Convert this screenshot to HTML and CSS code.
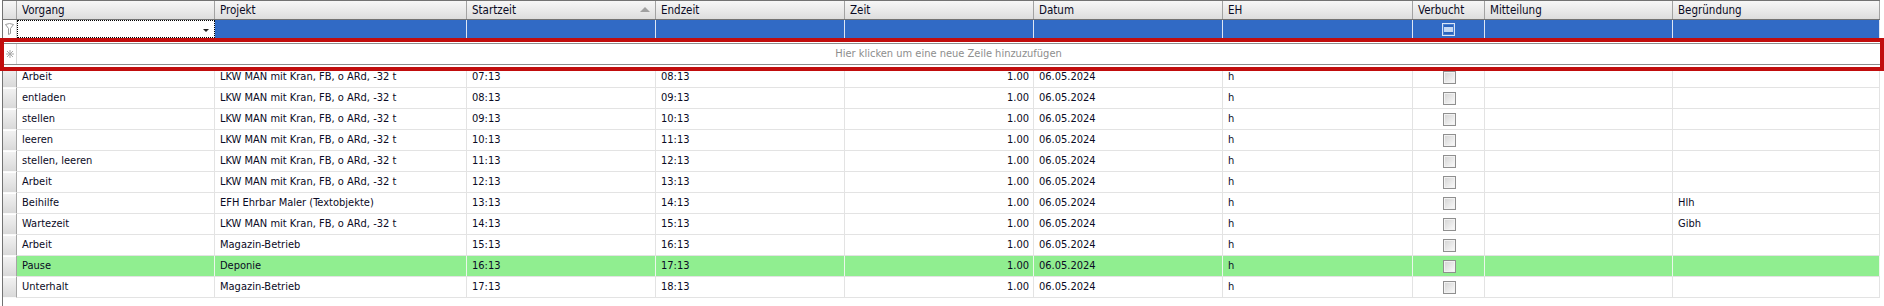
FILE: index.html
```html
<!DOCTYPE html>
<html lang="de">
<head>
    <meta charset="UTF-8">
    <title>Rapport - Vorgänge</title>
    <link rel="stylesheet" href="styles.css">
</head>
<body>
    <div class="grid">
        <!-- column headers -->
        <div class="row head">
            <div class="ind"></div>
            <div class="cell">Vorgang</div>
            <div class="cell">Projekt</div>
            <div class="cell sorted">Startzeit<span class="sort-up"></span></div>
            <div class="cell">Endzeit</div>
            <div class="cell">Zeit</div>
            <div class="cell">Datum</div>
            <div class="cell">EH</div>
            <div class="cell">Verbucht</div>
            <div class="cell">Mitteilung</div>
            <div class="cell">Begründung</div>
        </div>

        <!-- filter row -->
        <div class="row filter">
            <div class="ind">
                <svg width="9" height="12" viewBox="0 0 9 12">
                    <path d="M0.5 1.5 Q4.5 -0.5 8.5 1.5 L5.5 5.5 V10.5 L3.5 11.5 V5.5 Z" fill="#fff" stroke="#9a9a9a" stroke-width="1"/>
                </svg>
            </div>
            <div class="cell editor"><span class="drop"></span></div>
            <div class="cell"></div>
            <div class="cell"></div>
            <div class="cell"></div>
            <div class="cell"></div>
            <div class="cell"></div>
            <div class="cell"></div>
            <div class="cell center"><span class="check indeterminate"></span></div>
            <div class="cell"></div>
            <div class="cell"></div>
        </div>

        <!-- new row -->
        <div class="newrow">
            <div class="ind">
                <svg width="8" height="8" viewBox="0 0 8 8">
                    <g stroke="#a8a8a8" stroke-width="1">
                        <line x1="4" y1="0" x2="4" y2="8"/>
                        <line x1="0" y1="4" x2="8" y2="4"/>
                        <line x1="1" y1="1" x2="7" y2="7"/>
                        <line x1="7" y1="1" x2="1" y2="7"/>
                    </g>
                </svg>
            </div>
            <div class="hint">Hier klicken um eine neue Zeile hinzuzufügen</div>
        </div>

        <div class="row data">
            <div class="ind"></div>
            <div class="cell">Arbeit</div>
            <div class="cell">LKW MAN mit Kran, FB, o ARd, -32 t</div>
            <div class="cell">07:13</div>
            <div class="cell">08:13</div>
            <div class="cell num">1.00</div>
            <div class="cell">06.05.2024</div>
            <div class="cell">h</div>
            <div class="cell center"><span class="check"></span></div>
            <div class="cell"></div>
            <div class="cell"></div>
        </div>
        <div class="row data">
            <div class="ind"></div>
            <div class="cell">entladen</div>
            <div class="cell">LKW MAN mit Kran, FB, o ARd, -32 t</div>
            <div class="cell">08:13</div>
            <div class="cell">09:13</div>
            <div class="cell num">1.00</div>
            <div class="cell">06.05.2024</div>
            <div class="cell">h</div>
            <div class="cell center"><span class="check"></span></div>
            <div class="cell"></div>
            <div class="cell"></div>
        </div>
        <div class="row data">
            <div class="ind"></div>
            <div class="cell">stellen</div>
            <div class="cell">LKW MAN mit Kran, FB, o ARd, -32 t</div>
            <div class="cell">09:13</div>
            <div class="cell">10:13</div>
            <div class="cell num">1.00</div>
            <div class="cell">06.05.2024</div>
            <div class="cell">h</div>
            <div class="cell center"><span class="check"></span></div>
            <div class="cell"></div>
            <div class="cell"></div>
        </div>
        <div class="row data">
            <div class="ind"></div>
            <div class="cell">leeren</div>
            <div class="cell">LKW MAN mit Kran, FB, o ARd, -32 t</div>
            <div class="cell">10:13</div>
            <div class="cell">11:13</div>
            <div class="cell num">1.00</div>
            <div class="cell">06.05.2024</div>
            <div class="cell">h</div>
            <div class="cell center"><span class="check"></span></div>
            <div class="cell"></div>
            <div class="cell"></div>
        </div>
        <div class="row data">
            <div class="ind"></div>
            <div class="cell">stellen, leeren</div>
            <div class="cell">LKW MAN mit Kran, FB, o ARd, -32 t</div>
            <div class="cell">11:13</div>
            <div class="cell">12:13</div>
            <div class="cell num">1.00</div>
            <div class="cell">06.05.2024</div>
            <div class="cell">h</div>
            <div class="cell center"><span class="check"></span></div>
            <div class="cell"></div>
            <div class="cell"></div>
        </div>
        <div class="row data">
            <div class="ind"></div>
            <div class="cell">Arbeit</div>
            <div class="cell">LKW MAN mit Kran, FB, o ARd, -32 t</div>
            <div class="cell">12:13</div>
            <div class="cell">13:13</div>
            <div class="cell num">1.00</div>
            <div class="cell">06.05.2024</div>
            <div class="cell">h</div>
            <div class="cell center"><span class="check"></span></div>
            <div class="cell"></div>
            <div class="cell"></div>
        </div>
        <div class="row data">
            <div class="ind"></div>
            <div class="cell">Beihilfe</div>
            <div class="cell">EFH Ehrbar Maler (Textobjekte)</div>
            <div class="cell">13:13</div>
            <div class="cell">14:13</div>
            <div class="cell num">1.00</div>
            <div class="cell">06.05.2024</div>
            <div class="cell">h</div>
            <div class="cell center"><span class="check"></span></div>
            <div class="cell"></div>
            <div class="cell">Hlh</div>
        </div>
        <div class="row data">
            <div class="ind"></div>
            <div class="cell">Wartezeit</div>
            <div class="cell">LKW MAN mit Kran, FB, o ARd, -32 t</div>
            <div class="cell">14:13</div>
            <div class="cell">15:13</div>
            <div class="cell num">1.00</div>
            <div class="cell">06.05.2024</div>
            <div class="cell">h</div>
            <div class="cell center"><span class="check"></span></div>
            <div class="cell"></div>
            <div class="cell">Gibh</div>
        </div>
        <div class="row data">
            <div class="ind"></div>
            <div class="cell">Arbeit</div>
            <div class="cell">Magazin-Betrieb</div>
            <div class="cell">15:13</div>
            <div class="cell">16:13</div>
            <div class="cell num">1.00</div>
            <div class="cell">06.05.2024</div>
            <div class="cell">h</div>
            <div class="cell center"><span class="check"></span></div>
            <div class="cell"></div>
            <div class="cell"></div>
        </div>
        <div class="row data pause">
            <div class="ind"></div>
            <div class="cell">Pause</div>
            <div class="cell">Deponie</div>
            <div class="cell">16:13</div>
            <div class="cell">17:13</div>
            <div class="cell num">1.00</div>
            <div class="cell">06.05.2024</div>
            <div class="cell">h</div>
            <div class="cell center"><span class="check"></span></div>
            <div class="cell"></div>
            <div class="cell"></div>
        </div>
        <div class="row data">
            <div class="ind"></div>
            <div class="cell">Unterhalt</div>
            <div class="cell">Magazin-Betrieb</div>
            <div class="cell">17:13</div>
            <div class="cell">18:13</div>
            <div class="cell num">1.00</div>
            <div class="cell">06.05.2024</div>
            <div class="cell">h</div>
            <div class="cell center"><span class="check"></span></div>
            <div class="cell"></div>
            <div class="cell"></div>
        </div>
    </div>

    <!-- red annotation around the new-row line -->
    <div class="mark"></div>
</body>
</html>
```

FILE: styles.css
```css
:root {
    --cols: 14px 198px 252px 189px 189px 189px 189px 190px 72px 188px 207px;
    --text: #0a0a24;
    --line: #e3e3e3;
    --dark: #727272;
    --blue: #316ac5;
}
html, body {
    height: 100%;
}
body {
    margin: 0;
    background: #fff;
    color: var(--text);
    font-family: "DejaVu Sans Condensed", "DejaVu Sans", sans-serif;
    font-stretch: condensed;
    font-size: 11px;
    position: relative;
    overflow: hidden;
}
.grid {
    margin-left: 2px;
    border-left: 1px solid var(--dark);
    width: 1877px;
    height: 100%;
}
.row {
    display: grid;
    grid-template-columns: var(--cols);
    box-sizing: border-box;
}
.cell {
    box-sizing: border-box;
    padding: 0 4px;
    white-space: nowrap;
    overflow: hidden;
}
.ind {
    box-sizing: border-box;
    display: flex;
    align-items: center;
    justify-content: center;
}

/* header */
.head {
    height: 20px;
    border-top: 1px solid var(--dark);
    border-bottom: 1px solid var(--dark);
    background: linear-gradient(#f7f7f7, #dddddd);
}
.head .cell,
.head .ind {
    line-height: 18px;
    border-right: 1px solid #a2a2a2;
}
.head .cell {
    padding-left: 5px;
    font-size: 11.5px;
}
.sorted {
    position: relative;
}
.sort-up {
    position: absolute;
    right: 5px;
    top: 6px;
    width: 0;
    height: 0;
    border-left: 5px solid transparent;
    border-right: 5px solid transparent;
    border-bottom: 5px solid #a0a0a0;
}

/* filter row */
.filter {
    height: 18px;
    background: var(--blue);
}
.filter .ind {
    background: #fff;
    border-right: 1px solid #d6d6d6;
}
.filter .cell {
    border-right: 1px solid #dfe6f3;
}
.filter .editor {
    background: #fff;
    outline: 1px dotted #000;
    outline-offset: -1px;
    position: relative;
}
.drop {
    position: absolute;
    right: 5px;
    top: 9px;
    width: 0;
    height: 0;
    border-left: 3px solid transparent;
    border-right: 3px solid transparent;
    border-top: 3px solid #222;
}
.center {
    display: flex;
    align-items: center;
    justify-content: center;
}

/* new row */
.newrow {
    display: grid;
    grid-template-columns: 14px 1fr;
    margin: 5px 0 2px;
    height: 22px;
    box-sizing: border-box;
    border-top: 1px solid #8c8c8c;
    border-bottom: 1px solid #8c8c8c;
}
.newrow .ind {
    border-right: 1px solid #d8d8d8;
}
.hint {
    text-align: center;
    line-height: 20px;
    color: #8d8d8d;
}

/* data rows */
.data {
    height: 21px;
    border-bottom: 1px solid var(--line);
}
.data .cell {
    line-height: 20px;
    border-right: 1px solid var(--line);
    padding-left: 5px;
}
.data .ind {
    background: linear-gradient(#f3f3f3, #d9d9d9);
    border-right: 1px solid #a5a5a5;
    border-bottom: 1px solid #fafafa;
    margin-bottom: -1px;
    box-shadow: inset 0 1px 0 #fff;
}
.data .num {
    text-align: right;
    padding-right: 4px;
}
.pause .cell {
    background: #90ee90;
    border-right-color: #ebf7eb;
}

/* checkboxes */
.check {
    display: block;
    width: 13px;
    height: 13px;
    box-sizing: border-box;
    border: 1px solid #8f8f8f;
    background: linear-gradient(135deg, #d3d3d3, #fbfbfb);
    box-shadow: inset 0 0 0 1px #f2f2f2;
}
.check.indeterminate {
    border: 1px solid #dbe5f5;
    background: linear-gradient(#2a63bd 0 3px, #c4d8f4 3px 8px, #2a63bd 8px);
    box-shadow: inset 0 0 0 1px #4a7fd0;
}

/* annotation */
.mark {
    position: absolute;
    left: 0;
    top: 38px;
    width: 1884px;
    height: 33px;
    box-sizing: border-box;
    border: 4px solid #c10d0d;
    pointer-events: none;
}
```
